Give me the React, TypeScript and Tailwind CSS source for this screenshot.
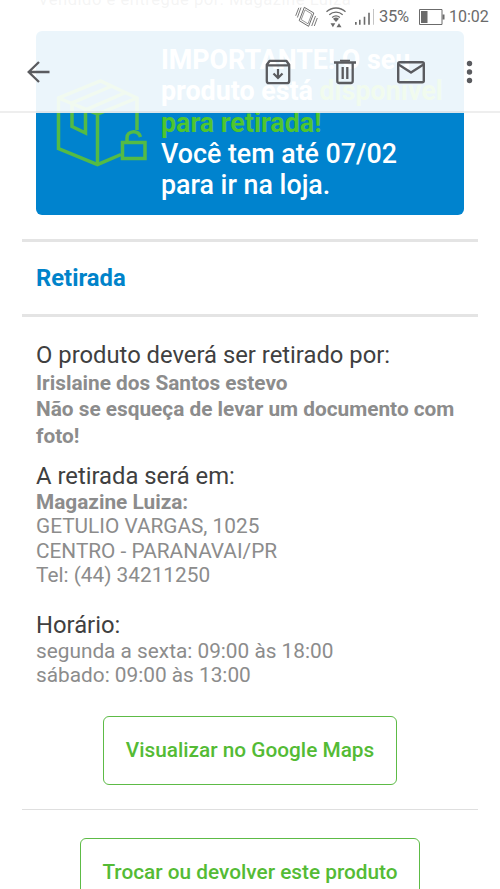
function StatusBar() {
  return (
    <div className="flex h-[34px] items-center pl-[295px] text-[#6b6b6b]">
      {/* Vibrate */}
      <svg className="h-[22px] w-[23px] shrink-0" viewBox="0 0 23 22" fill="none" stroke="currentColor" strokeWidth="1" strokeLinejoin="round">
        <path d="M9.300 1.300 18.800 7 13.600 20.300 4.200 14.600Z" />
        <path d="M10 3.800 16.800 8 13 17.800 6.200 13.600Z" strokeWidth=".7" />
        <path d="M6 1.500 2.400 11.500M3.800 1.800.7 9.800M20.500 10l-3.800 10M22.300 12l-3 8" strokeWidth=".9" />
      </svg>
      {/* Wi-Fi */}
      <svg className="ml-[8px] h-[22px] w-[20px] shrink-0" viewBox="0 0 20 22" fill="none" stroke="currentColor" strokeWidth="1.3">
        <path d="M.5 5.700c5.400-4.900 13.600-4.900 19 0M3.300 8.700c3.900-3.400 9.500-3.400 13.400 0M6.100 11.500c2.300-1.900 5.500-1.900 7.800 0" />
        <path d="m7 12.700 3 3.200 3-3.200a4.600 4.600 0 0 0-6 0ZM4.500 17.200h4.800l-2.400 4ZM10.500 21.200h5l-2.500-4Z" fill="currentColor" stroke="none" />
      </svg>
      {/* Signal */}
      <svg className="ml-[9px] h-[18px] w-[20px] shrink-0" viewBox="0 0 20 18" fill="currentColor">
        <path d="M0 14h1.700v2.700H0zM4 11.700h1.600v5H4zM8.700 8.700h1.600v8H8.700zM13.200 4.700h1.600v12h-1.600z" />
        <path d="M18 1h1v15.700h-1z" opacity=".4" />
      </svg>
      <span className="ml-[4px] w-[31px] text-[16.500px] tracking-[-0.3px] whitespace-nowrap">35%</span>
      <svg className="ml-[9px] h-[18px] w-[26px] shrink-0" viewBox="0 0 26 18" fill="none" stroke="currentColor" strokeWidth="1">
        <path d="M.5 1.500h22.500v15H.5z" />
        <path d="M2 3h6.500v12H2zM23.500 6.500H25.500v5h-2z" fill="currentColor" stroke="none" />
      </svg>
      <span className="ml-[4px] text-[16px] whitespace-nowrap">10:02</span>
    </div>
  );
}

function Toolbar() {
  return (
    <div className="flex h-[76px] items-center pl-[26px] text-[#5a5b5f]">
      <svg className="h-[24px] w-[24px]" viewBox="0 0 24 24" fill="none" stroke="currentColor" strokeWidth="2.300">
        <path d="M23.500 12H2.500M13 2 2.700 12 13 22" />
      </svg>
      {/* Archive */}
      <svg className="ml-[215px] h-[26px] w-[26px]" viewBox="0 0 26 26" fill="none" stroke="currentColor" strokeWidth="2.300" strokeLinejoin="round">
        <path d="M1.800 5.800 4.700 1.800h16.600l2.900 4V22a2.200 2.200 0 0 1-2.200 2.200H4A2.200 2.200 0 0 1 1.800 22ZM2 6.300h22" />
        <path d="M13 10v8.500M8.500 14.500l4.500 4.500 4.500-4.500" strokeWidth="2.200" strokeLinejoin="miter" />
      </svg>
      {/* Delete */}
      <svg className="ml-[43px] h-[26px] w-[22px]" viewBox="0 0 22 26" fill="none" stroke="currentColor" strokeWidth="2.300">
        <path d="M0 3.500h22M3.300 4v18a2 2 0 0 0 2 2h11.400a2 2 0 0 0 2-2V4M8.700 8v12M13.300 8v12" />
        <path d="M7 2.500V1.800h8v.7" strokeWidth="2" />
      </svg>
      {/* Mark unread */}
      <svg className="ml-[40px] h-[24px] w-[30px]" viewBox="0 0 30 24" fill="none" stroke="currentColor" strokeWidth="2.400" strokeLinejoin="round">
        <rect x="2.200" y="2.200" width="25.600" height="20" rx="1.500" />
        <path d="m2.500 4.500 12.500 8 12.500-8" />
      </svg>
      <svg className="ml-[39px] h-[24px] w-[8px]" viewBox="0 0 8 24" fill="currentColor">
        <circle cx="4.500" cy="3.500" r="2.700" />
        <circle cx="4.500" cy="12" r="2.700" />
        <circle cx="4.500" cy="20.500" r="2.700" />
      </svg>
    </div>
  );
}

function BoxIcon() {
  return (
    <svg className="mt-[47px] h-[90px] w-[92px] shrink-0" viewBox="56 78 92 90" fill="none" stroke="#54bb45" strokeWidth="3.500">
      <path d="M121 154.500 97.500 164.500 58.500 148.500V98l42-17 36.500 17v32" />
      <path d="m58.500 98 39 16 39.500-16M97.500 114v50" />
      <path d="m112 86-40 17v23.500l13.500 6.500v-23l39-17" />
      <rect x="122.500" y="142.500" width="22.500" height="16" />
      <path d="M127 142v-4c0-7.500 11-8.500 13.500-1" />
    </svg>
  );
}

export default function App() {
  return (
    <div className="relative h-[889px] w-[500px] overflow-hidden bg-white font-['Roboto',sans-serif] text-[#8c8c8c]">
      <main className="flex flex-col">
        <p className="-mt-[12px] h-[43px] pl-[38px] text-[16.600px] leading-[24px] tracking-[0.500px] whitespace-nowrap text-[#777]">
          Vendido e entregue por: Magazine Luiza
        </p>

        <section className="mx-[36px] flex h-[184px] rounded-[6px] bg-[#0083ce] pl-[20px]">
          <BoxIcon />
          <p className="ml-[13px] pt-[14px] text-[26.800px] leading-[31.300px] font-medium whitespace-nowrap text-white">
            <b>IMPORTANTE! O seu</b>
            <br />
            <b>
              produto está <span className="text-[#4fc52f]">disponível</span>
            </b>
            <br />
            <b className="text-[#4fc52f]">para retirada!</b>
            <br />
            Você tem até 07/02
            <br />
            para ir na loja.
          </p>
        </section>

        <h2 className="mx-[22px] mt-[24px] h-[78px] border-y-3 border-[#e4e4e4] pl-[14px] text-[23.800px] leading-[73px] font-bold text-[#0083ca]">
          Retirada
        </h2>

        <section className="pt-[24px] pl-[36px] text-[20.800px] whitespace-nowrap">
          <h3 className="text-[23.800px] leading-[29px] text-[#404040]">O produto deverá ser retirado por:</h3>
          <p className="leading-[26.300px] font-bold">
            Irislaine dos Santos estevo
            <br />
            Não se esqueça de levar um documento com
            <br />
            foto!
          </p>
        </section>

        <section className="pt-[13px] pl-[36px] text-[20.800px] leading-[24.400px] whitespace-nowrap">
          <h3 className="text-[23.800px] leading-[28px] text-[#404040]">A retirada será em:</h3>
          <p className="font-bold">Magazine Luiza:</p>
          <p>GETULIO VARGAS, 1025</p>
          <p>CENTRO - PARANAVAI/PR</p>
          <p>Tel: (44) 34211250</p>
        </section>

        <section className="pt-[23px] pl-[36px] text-[20.800px] leading-[24.400px] whitespace-nowrap">
          <h3 className="text-[23.800px] leading-[28px] text-[#404040]">Horário:</h3>
          <p>segunda a sexta: 09:00 às 18:00</p>
          <p>sábado: 09:00 às 13:00</p>
        </section>

        <div className="mx-[22px] mt-[29px] flex h-[94px] justify-center border-b border-[#dfdfdf]">
          <button className="h-[69px] w-[294px] rounded-[6px] border border-[#5dbb46] text-[20.800px] font-medium whitespace-nowrap text-[#54bb35]">
            Visualizar no Google Maps
          </button>
        </div>
        <button className="mx-auto mt-[28px] h-[69px] w-[340px] rounded-[6px] border border-[#5dbb46] text-[20.800px] font-medium whitespace-nowrap text-[#54bb35]">
          Trocar ou devolver este produto
        </button>
      </main>

      <header className="absolute inset-x-0 top-0 h-[113px] border-b-2 border-[#77777720] bg-white/92">
        <StatusBar />
        <Toolbar />
      </header>
    </div>
  );
}
